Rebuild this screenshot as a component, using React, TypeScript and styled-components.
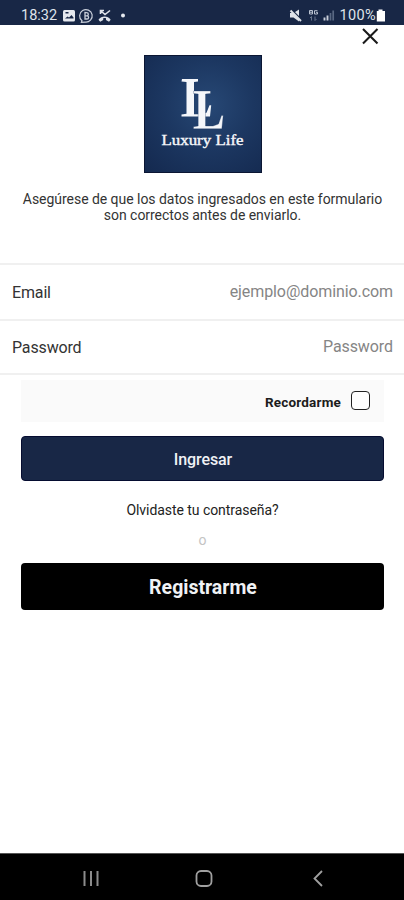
import React from "react";
import styled, { createGlobalStyle } from "styled-components";

const GlobalStyle = createGlobalStyle`
  * { box-sizing: border-box; }
  body { margin: 0; background: #fff; font-family: Roboto, "Liberation Sans", sans-serif; }
`;

const Screen = styled.div`
  width: 404px;
  height: 900px;
  display: flex;
  flex-direction: column;
  overflow: hidden;
  background: #fff;
`;

const StatusBar = styled.header`
  height: 25px;
  flex: none;
  display: flex;
  justify-content: space-between;
  padding: 6px 18px 0 21px;
  background: #182746;
  color: #dfe3ea;
`;

const StatusGroup = styled.div`
  display: flex;
  align-items: flex-start;
`;

const StatusText = styled.span<{ $spacing?: string }>`
  font-size: 14.5px;
  line-height: 20px;
  height: 19px;
  letter-spacing: ${(p) => p.$spacing ?? "0"};
  white-space: nowrap;
`;

const CloseRow = styled.div`
  height: 30px;
  flex: none;
  display: flex;
  justify-content: flex-end;
  padding: 3px 25px 0 0;
`;

const CloseButton = styled.button`
  width: 18px;
  height: 18px;
  padding: 0;
  border: 0;
  background: none;
  display: flex;
`;

const Logo = styled.div`
  width: 118px;
  height: 118px;
  flex: none;
  margin-left: 144px;
  border: 1px solid #0b1633;
  background: radial-gradient(circle at 55% 42%, #274875 0%, #1c3761 48%, #14294f 100%);
`;

const Description = styled.p`
  margin: 18px 0 0;
  height: 72px;
  flex: none;
  text-align: center;
  color: #333;
  font-size: 14px;
  line-height: 16px;
  padding-left: 1px;
`;

const Line = styled.span`
  display: block;
  letter-spacing: -0.04px;
  white-space: nowrap;
`;

const Field = styled.label<{ $height: number }>`
  height: ${(p) => p.$height}px;
  flex: none;
  display: flex;
  align-items: center;
  justify-content: space-between;
  padding: 0 11px 0 12px;
  border-top: 2px solid #f0f0f0;
`;

const FieldName = styled.span`
  font-size: 16px;
  line-height: 20px;
  padding-top: 2px;
  letter-spacing: -0.15px;
  color: #333;
`;

const FieldInput = styled.input`
  width: 220px;
  padding: 0;
  border: 0;
  outline: 0;
  background: none;
  text-align: right;
  font: 16px/20px Roboto, sans-serif;
  letter-spacing: -0.08px;
  &::placeholder { color: #858585; opacity: 1; }
`;

const Actions = styled.div`
  flex: 1;
  display: flex;
  flex-direction: column;
  border-top: 2px solid #f0f0f0;
  padding: 5px 20px 0 21px;
`;

const Remember = styled.div`
  height: 42px;
  margin-bottom: 14px;
  flex: none;
  display: flex;
  align-items: center;
  justify-content: flex-end;
  gap: 10px;
  padding-right: 14px;
  background: #fafafa;
`;

const RememberText = styled.span`
  font-size: 13.5px;
  font-weight: 700;
  line-height: 16px;
  padding-top: 2px;
  letter-spacing: 0.18px;
  color: #1c1c1c;
`;

const CheckBox = styled.span`
  width: 19px;
  height: 19px;
  margin-top: -2px;
  border: 1.5px solid #222;
  border-radius: 4px;
  background: #fff;
`;

const Button = styled.button<{ $primary?: boolean }>`
  height: ${(p) => (p.$primary ? 45 : 47)}px;
  flex: none;
  padding: ${(p) => (p.$primary ? "2px 0 0 1px" : "1px 0 0 1px")};
  border: ${(p) => (p.$primary ? "1px solid #050c30" : "0")};
  border-radius: 4px;
  background: ${(p) => (p.$primary ? "#182746" : "#000")};
  color: #f0f2f5;
  font-family: Roboto, sans-serif;
  font-size: ${(p) => (p.$primary ? "16px" : "19.5px")};
  font-weight: ${(p) => (p.$primary ? 500 : 700)};
  letter-spacing: ${(p) => (p.$primary ? "-0.1px" : "0")};
`;

const Forgot = styled.a`
  margin-top: 21px;
  height: 16px;
  text-align: center;
  font-size: 14px;
  letter-spacing: -0.06px;
  line-height: 16px;
  color: #222;
`;

const Or = styled.span`
  margin: 14px 0 15px;
  height: 16px;
  text-align: center;
  font-size: 14px;
  line-height: 16px;
  color: #c4c4c4;
`;

const NavBar = styled.nav`
  height: 47px;
  flex: none;
  display: flex;
  justify-content: space-between;
  padding: 14px 77px 0 81px;
  border-top: 1px solid #555;
  background: #000;
`;

export default function App() {
  return (
    <>
      <GlobalStyle />
      <Screen>
        <StatusBar>
          <StatusGroup>
            <StatusText>18:32</StatusText>
            <svg width="72" height="18" viewBox="58 6 72 18" fill="none">
              <rect x="64" y="10" width="12" height="11.5" rx="1.5" fill="#e6e9ef" />
              <path d="M66 18.500l2.500-2 1.500 1 2.500-2.500 2 2.500v1z" fill="#182746" />
              <rect x="66.500" y="12" width="3" height="1.500" fill="#182746" />
              <path d="M83 20.800a6.300 6.300 0 1 1 3 1.300l-3.600.2z" stroke="#c9cfda" strokeWidth="1.200" />
              <path d="M86 12.500v6.500h2a1.600 1.600 0 0 0 0-3.200h-2 1.700a1.600 1.600 0 0 0 0-3.200z" stroke="#c9cfda" strokeWidth="1.300" />
              <path d="M101.500 14v-3.500h3.500M102 11l4 3.500 5-4" stroke="#dfe3ea" strokeWidth="1.600" />
              <path d="M99.500 19.700c3-4.300 9.200-4.300 12.200 0l-1.700 2-3-1.800v-1.700c-.9-.3-1.900-.3-2.800 0v1.700l-3 1.800z" fill="#dfe3ea" />
              <circle cx="124" cy="15.500" r="2" fill="#e6e9ef" />
            </svg>
          </StatusGroup>
          <StatusGroup>
            <svg width="51" height="18" viewBox="288 6 51 18" fill="none">
              <path d="M289 13h3.500l5.500-3.500v12l-5.500-4H289z" fill="#dfe3ea" />
              <path d="M289 8.500l11.500 11.500" stroke="#182746" strokeWidth="2" />
              <path d="M289.500 10.500l10.500 10.500" stroke="#dfe3ea" strokeWidth="2" />
              <path d="M308.500 10.500h3v3.500h-3v-3.500M308.500 12.200h3M316.500 10.700H313.500V14h3v-1.700h-1.500" stroke="#bac2d0" strokeWidth="1" />
              <path d="M310.500 16.500v4M309 18l1.500-1.500M314 16.500v4M315.500 19l-1.500 1.500" stroke="#68758c" strokeWidth="1" />
              <path d="M323.500 20.500v-3M326.500 20.500v-5" stroke="#c9cfda" strokeWidth="1.900" />
              <path d="M329.500 20.500v-7.500M332.200 20.500v-10" stroke="#596883" strokeWidth="1.700" />
            </svg>
            <StatusText $spacing="0.35px">100%</StatusText>
            <svg width="10" height="18" viewBox="0 0 10 18">
              <path d="M2.500 3.500h4V5H9v10.500H.8V5h1.700z" fill="#fff" />
            </svg>
          </StatusGroup>
        </StatusBar>

        <CloseRow>
          <CloseButton aria-label="Cerrar">
            <svg width="18" height="18" viewBox="0 0 18 18" fill="none" stroke="#1a1a1a" strokeWidth="2.100">
              <path d="M2 1l14.500 14.500M16.500 1L2 15.500" />
            </svg>
          </CloseButton>
        </CloseRow>

        <Logo>
          <svg width="116" height="116" viewBox="145 56 116 116" fill="#f5f7fa">
            <path d="M182 79h16v2.500l-4 .5v32.300h7l5.500-1.500 3-7.500h1.700l-1.200 11.200h-28.500v-2l5-.8V82l-5-.5z" />
            <path d="M193.500 91h17v2.500l-5 .5v32h7.500l5.500-2 3-8.500h1.700l-1.400 13.200h-28.300v-2l4.700-.8V94l-4.700-.5z" stroke="#1c3761" strokeWidth="0.300" />
            <text x="161.500" y="144.500" textLength="82" lengthAdjust="spacingAndGlyphs" fontFamily="Liberation Serif, serif" fontSize="15.500" stroke="#f5f7fa" strokeWidth="0.400">Luxury Life</text>
          </svg>
        </Logo>

        <Description>
          <Line>Asegúrese de que los datos ingresados en este formulario</Line>
          <Line>son correctos antes de enviarlo.</Line>
        </Description>

        <Field $height={56}>
          <FieldName>Email</FieldName>
          <FieldInput placeholder="ejemplo@dominio.com" />
        </Field>
        <Field $height={54}>
          <FieldName>Password</FieldName>
          <FieldInput type="password" placeholder="Password" />
        </Field>

        <Actions>
          <Remember>
            <RememberText>Recordarme</RememberText>
            <CheckBox />
          </Remember>
          <Button $primary>Ingresar</Button>
          <Forgot>Olvidaste tu contraseña?</Forgot>
          <Or>o</Or>
          <Button>Registrarme</Button>
        </Actions>

        <NavBar>
          <svg width="20" height="22" fill="none" stroke="#8c8c8c" strokeWidth="2">
            <path d="M3.500 3v15M10 3v15M16.500 3v15" />
          </svg>
          <svg width="20" height="22" fill="none" stroke="#a0a0a0" strokeWidth="1.800">
            <rect x="2.500" y="3" width="15" height="15" rx="4.500" />
          </svg>
          <svg width="20" height="22" fill="none" stroke="#a0a0a0" strokeWidth="1.800">
            <path d="M15 3L7.500 10.500 15 18" />
          </svg>
        </NavBar>
      </Screen>
    </>
  );
}
